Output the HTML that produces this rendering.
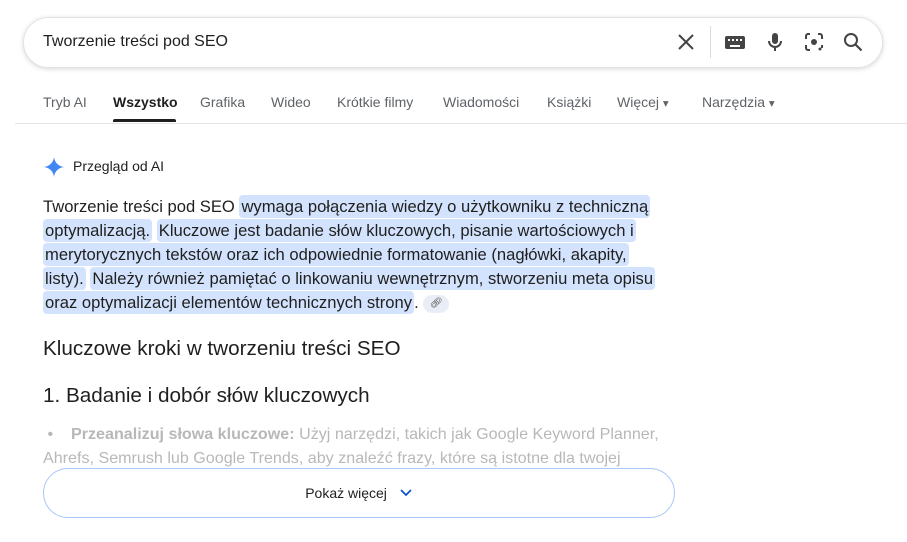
<!DOCTYPE html>
<html><head><meta charset="utf-8"><style>
body{margin:0;width:907px;height:542px;background:#fff;font-family:"Liberation Sans",Arial,sans-serif;color:#1f1f1f;position:relative;overflow:hidden}
.box{position:absolute;left:23px;top:17px;width:858px;height:49px;border-radius:26px;border:1px solid #e3e3e3;box-shadow:0 1px 5px rgba(32,33,36,.18);background:#fff}
.q{position:absolute;left:43px;top:33px;font-size:16px;color:#1f1f1f}
.ic{position:absolute;top:30px}
.tabs{position:absolute;top:94px;left:0;font-size:14px;color:#5f6368}
.tabs span{position:absolute;white-space:nowrap}
.line{position:absolute;top:123px;left:15px;right:0;height:1px;background:#e3e3e3}
.p{position:absolute;left:43px;top:195px;font-size:16.6px;line-height:24px;white-space:nowrap;color:#1f1f1f}
.h{background:#d3e3fd;border-radius:4px;padding:2px 2px}
.h2{position:absolute;left:43px;font-size:20.7px;color:#1f1f1f}
.fade{position:absolute;left:43px;top:422px;font-size:16.1px;line-height:24px;color:#b8b8b8;white-space:nowrap}
.btn{position:absolute;left:43px;top:468px;width:630px;height:48px;border:1px solid #a8c7fa;border-radius:25px;background:#fff;font-size:14px;text-align:center;line-height:48px;color:#1f1f1f}
</style></head><body>
<div class="box"></div>
<div class="q">Tworzenie treści pod SEO</div>
<svg class="ic" style="left:676px" width="20" height="24" viewBox="0 0 20 24"><path d="M3 5l14 14M17 5L3 19" stroke="#444" stroke-width="2"/></svg>
<div style="position:absolute;left:710px;top:26px;width:1px;height:32px;background:#dadce0"></div>
<svg class="ic" style="left:723px" width="24" height="24" viewBox="0 0 24 24"><rect x="2" y="6" width="20" height="13" rx="2" fill="#444"/><g fill="#fff"><rect x="5" y="9" width="2" height="2"/><rect x="9" y="9" width="2" height="2"/><rect x="13" y="9" width="2" height="2"/><rect x="17" y="9" width="2" height="2"/><rect x="7" y="15" width="10" height="2"/></g></svg>
<svg class="ic" style="left:763px" width="24" height="24" viewBox="0 0 24 24"><rect x="9" y="3" width="6" height="11" rx="3" fill="#444"/><path d="M6 11a6 6 0 0 0 12 0M12 17v4" stroke="#444" stroke-width="2" fill="none"/></svg>
<svg class="ic" style="left:802px" width="24" height="24" viewBox="0 0 24 24"><path d="M4 9V6a2 2 0 0 1 2-2h2M16 4h2a2 2 0 0 1 2 2v3M4 15v3a2 2 0 0 0 2 2h2M20 15v3" stroke="#444" stroke-width="2" fill="none"/><circle cx="12" cy="12" r="3" fill="#444"/><circle cx="18" cy="19" r="1.5" fill="#444"/></svg>
<svg class="ic" style="left:841px" width="24" height="24" viewBox="0 0 24 24"><circle cx="10" cy="10" r="6" stroke="#444" stroke-width="2" fill="none"/><path d="M14.5 14.5l6 6" stroke="#444" stroke-width="2.2"/></svg>
<div class="tabs">
<span style="left:43px">Tryb AI</span>
<span style="left:113px;color:#1f1f1f;font-weight:bold">Wszystko</span>
<span style="left:200px">Grafika</span>
<span style="left:271px">Wideo</span>
<span style="left:337px">Krótkie filmy</span>
<span style="left:443px">Wiadomości</span>
<span style="left:547px">Książki</span>
<span style="left:617px">Więcej <small>▾</small></span>
<span style="left:702px">Narzędzia <small>▾</small></span>
</div>
<div style="position:absolute;left:113px;top:119px;width:63px;height:3px;background:#1f1f1f;border-radius:2px 2px 0 0"></div>
<div class="line"></div>
<svg style="position:absolute;left:43px;top:156px" width="22" height="22" viewBox="0 0 24 24"><path d="M12 1C12.5 7 17 11.5 23 12C17 12.5 12.5 17 12 23C11.5 17 7 12.5 1 12C7 11.5 11.5 7 12 1Z" fill="#4285f4"/></svg>
<div style="position:absolute;left:73px;top:158px;font-size:14px">Przegląd od AI</div>
<div class="p">Tworzenie treści pod SEO <span class="h">wymaga połączenia wiedzy o użytkowniku z techniczną</span><br><span class="h">optymalizacją.</span> <span class="h">Kluczowe jest badanie słów kluczowych, pisanie wartościowych i</span><br><span class="h">merytorycznych tekstów oraz ich odpowiednie formatowanie (nagłówki, akapity,</span><br><span class="h">listy).</span> <span class="h">Należy również pamiętać o linkowaniu wewnętrznym, stworzeniu meta opisu</span><br><span class="h">oraz optymalizacji elementów technicznych strony</span>. <span style="display:inline-block;width:26px;height:18px;background:#e9eef6;border-radius:9px;vertical-align:middle;text-align:center;font-size:10px;line-height:18px;color:#444">🔗︎</span></div>
<div class="h2" style="top:337px">Kluczowe kroki w tworzeniu treści SEO</div>
<div class="h2" style="top:384px">1. Badanie i dobór słów kluczowych</div>
<div class="fade">&nbsp;•&nbsp;&nbsp;&nbsp;&nbsp;<b>Przeanalizuj słowa kluczowe:</b> Użyj narzędzi, takich jak Google Keyword Planner,<br>Ahrefs, Semrush lub Google Trends, aby znaleźć frazy, które są istotne dla twojej</div>
<div class="btn">Pokaż więcej <svg width="14" height="10" viewBox="0 0 14 10" style="margin-left:8px"><path d="M2 2l5 5 5-5" stroke="#0b57d0" stroke-width="1.8" fill="none"/></svg></div>
</body></html>
